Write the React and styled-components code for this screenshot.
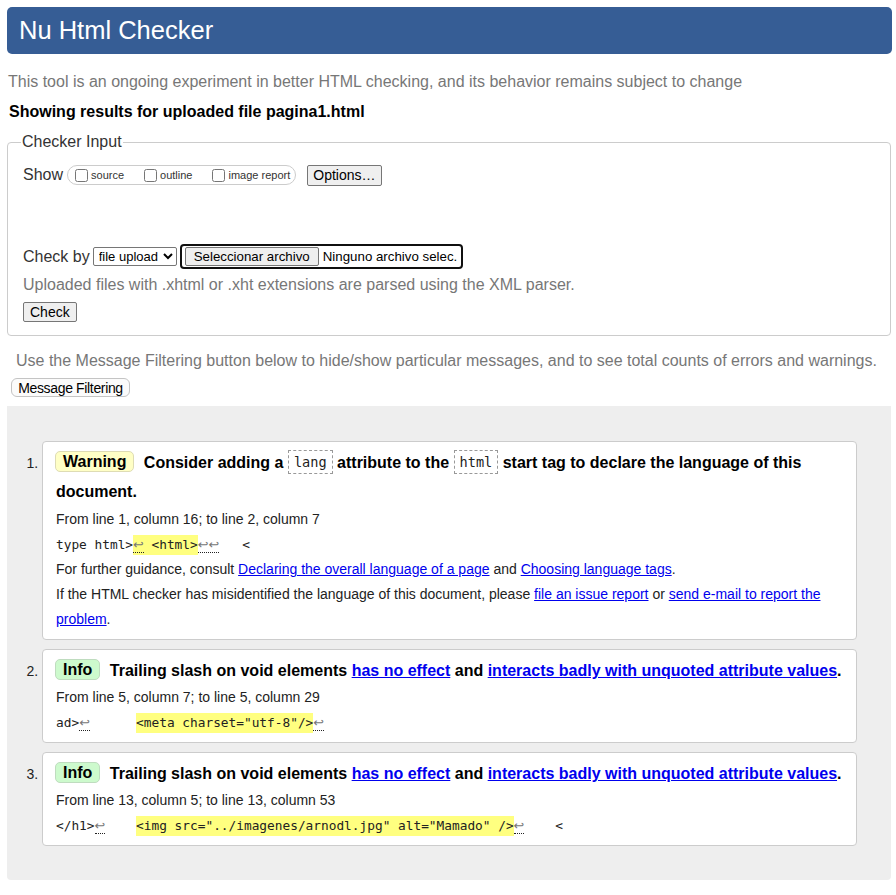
import React from "react";
import styled, { createGlobalStyle } from "styled-components";

const Global = createGlobalStyle`
  html, body { margin: 0; padding: 0; background: #fff; }
  body { font-family: "Liberation Sans", Arial, sans-serif; color: #000; }
`;

const Page = styled.div`
  padding: 7px 4px 15px 7px;
`;

const Header = styled.header`
  height: 47px;
  background: #365d95;
  border-radius: 5px;
  display: flex;
  align-items: center;
  padding-left: 12px;
`;

const Title = styled.h1`
  margin: 0 0 1px 0;
  font-size: 25.5px;
  font-weight: normal;
  color: #fff;
  line-height: 30px;
`;

const Intro = styled.p`
  margin: 18px 0 0 1px;
  font-size: 16px;
  line-height: 20px;
  color: #777;
`;

const Showing = styled.p`
  margin: 10px 0 0 2px;
  font-size: 16px;
  line-height: 20px;
  font-weight: bold;
`;

const Fieldset = styled.fieldset`
  margin: 10px 1px 0 0;
  padding: 0 14px 13px 15px;
  border: 1px solid #ccc;
  border-radius: 4px;
`;

const Legend = styled.legend`
  font-size: 16px;
  line-height: 20px;
  padding: 0 1px;
  margin-left: -2px;
  color: #333;
`;

const Row = styled.div`
  display: flex;
  align-items: center;
  margin-top: ${(p) => p.$mt}px;
  height: ${(p) => p.$h}px;
`;

const Label = styled.span`
  font-size: 16px;
  color: #333;
`;

const Pill = styled.span`
  display: inline-flex;
  align-items: center;
  height: 18px;
  margin-left: 4px;
  padding: 0 5px 0 3px;
  border: 1px solid #ccc;
  border-radius: 10px;
`;

const CheckItem = styled.label`
  display: inline-flex;
  align-items: center;
  font-size: 11px;
  color: #333;
  margin-right: ${(p) => (p.$last ? 0 : 16)}px;
  input { margin: 0 3px 0 4px; width: 13px; height: 13px; }
`;

const Button = styled.button`
  font-family: "Liberation Sans", Arial, sans-serif;
  font-size: ${(p) => p.$fs || 14}px;
  height: ${(p) => p.$h || 21}px;
  padding: 0 ${(p) => p.$px || 5}px;
  margin-left: ${(p) => p.$ml || 0}px;
  background: #efefef;
  color: #000;
  border: 1px solid #767676;
  border-radius: 2px;
  line-height: 1;
`;

const Select = styled.select`
  font-family: "Liberation Sans", Arial, sans-serif;
  font-size: 13px;
  height: 19px;
  width: 84px;
  margin-left: 3px;
  padding: 0 0 0 1px;
  border: 1px solid #767676;
  border-radius: 2px;
  background: #fff;
  color: #000;
`;

const FileBox = styled.span`
  display: inline-flex;
  align-items: center;
  height: 21px;
  margin-left: 3px;
  padding: 0 4px 0 3px;
  border: 2px solid #101010;
  border-radius: 4px;
`;

const FileName = styled.span`
  font-size: 13.3px;
  margin-left: 4px;
  color: #000;
`;

const Note = styled.p`
  margin: ${(p) => p.$mt}px 0 0 ${(p) => p.$ml || 0}px;
  font-size: 16px;
  line-height: 20px;
  color: #777;
  white-space: nowrap;
`;

const FilterButton = styled.button`
  display: block;
  margin: 7px 0 0 4px;
  height: 19px;
  width: 119px;
  padding: 0;
  font-family: "Liberation Sans", Arial, sans-serif;
  font-size: 14px;
  letter-spacing: -0.35px;
  background: #fbfbfb;
  border: 1px solid #c4c4c4;
  border-radius: 6px;
  color: #000;
`;

const Panel = styled.div`
  margin: 9px 1px 0 0;
  padding: 35px 34px 34px 35px;
  background: #eee;
  border-radius: 0 0 4px 4px;
`;

const List = styled.ol`
  margin: 0;
  padding: 0;
`;

const Item = styled.li`
  font-size: 14px;
  color: #222;
  background: #fff;
  border: 1px solid #ccc;
  border-radius: 4px;
  padding: ${(p) => p.$pt}px 14px 7px 13px;
  margin-bottom: ${(p) => (p.$last ? 0 : 9)}px;
`;

const Heading = styled.p`
  margin: 0 0 1px 0;
  font-size: 16px;
  line-height: ${(p) => p.$lh}px;
  font-weight: bold;
  color: #000;
`;

const Badge = styled.strong`
  display: inline-block;
  height: 19px;
  line-height: 19px;
  padding: 0 7px;
  margin: 0 5px 0 -1px;
  border: 1px solid ${(p) => (p.$kind === "warning" ? "#dedcb4" : "#bfdcbf")};
  border-radius: 5px;
  background: ${(p) => (p.$kind === "warning" ? "#ffffc6" : "#cdfacd")};
  color: #000;
  vertical-align: 1px;
`;

const CodeBox = styled.code`
  display: inline-block;
  height: 18px;
  line-height: 18px;
  padding: 2px 5px;
  border: 1px dashed #999;
  font-family: "DejaVu Sans Mono", monospace;
  font-size: 13.6px;
  font-weight: normal;
  color: #222;
  vertical-align: 1px;
`;

const Line = styled.p`
  margin: 0;
  font-size: 14px;
  line-height: 25px;
  color: #222;
`;

const Extract = styled.p`
  margin: 0;
  font-family: "DejaVu Sans Mono", monospace;
  font-size: 12.8px;
  line-height: 25px;
  white-space: pre;
  color: #222;
`;

const Mark = styled.mark`
  background: #ffff80;
  color: #222;
  padding: 2px 0 3px;
`;

const LF = styled.span`
  font-family: "DejaVu Sans", sans-serif;
  color: #777;
  border-bottom: 1px dotted #222;
`;

const A = styled.a`
  color: #0000ee;
  text-decoration: underline;
`;

const InfoHeading = () => (
  <Heading $lh={27}>
    <Badge $kind="info">Info</Badge> Trailing slash on void elements{" "}
    <A href="#">has no effect</A> and{" "}
    <A href="#">interacts badly with unquoted attribute values</A>.
  </Heading>
);

export default function App() {
  return (
    <>
      <Global />
      <Page>
        <Header>
          <Title>Nu Html Checker</Title>
        </Header>
        <Intro>
          This tool is an ongoing experiment in better HTML checking, and its behavior remains subject to change
        </Intro>
        <Showing>Showing results for uploaded file pagina1.html</Showing>

        <Fieldset>
          <Legend>Checker Input</Legend>
          <Row $mt={12} $h={22}>
            <Label>Show</Label>
            <Pill>
              <CheckItem>
                <input type="checkbox" />
                source
              </CheckItem>
              <CheckItem>
                <input type="checkbox" />
                outline
              </CheckItem>
              <CheckItem $last>
                <input type="checkbox" />
                image report
              </CheckItem>
            </Pill>
            <Button $ml={11}>Options…</Button>
          </Row>
          <Row $mt={58} $h={25}>
            <Label>Check by</Label>
            <Select defaultValue="file">
              <option value="file">file upload</option>
              <option value="address">address</option>
              <option value="text">text input</option>
            </Select>
            <FileBox>
              <Button $fs={13.3} $h={19} $px={8}>Seleccionar archivo</Button>
              <FileName>Ninguno archivo selec.</FileName>
            </FileBox>
          </Row>
          <Note $mt={6}>Uploaded files with .xhtml or .xht extensions are parsed using the XML parser.</Note>
          <Row $mt={7} $h={20}>
            <Button $h={20} $px={6}>Check</Button>
          </Row>
        </Fieldset>

        <Note $mt={15} $ml={9}>
          Use the Message Filtering button below to hide/show particular messages, and to see total counts of errors and warnings.
        </Note>
        <FilterButton>Message Filtering</FilterButton>

        <Panel>
          <List>
            <Item $pt={6}>
              <Heading $lh={29}>
                <Badge $kind="warning">Warning</Badge> Consider adding a <CodeBox>lang</CodeBox> attribute to the{" "}
                <CodeBox>html</CodeBox> start tag to declare the language of this document.
              </Heading>
              <Line>From line 1, column 16; to line 2, column 7</Line>
              <Extract>
                {"type html>"}
                <Mark>
                  <LF>↩</LF>
                  {" <html>"}
                </Mark>
                <LF>↩↩</LF>
                {"   <"}
              </Extract>
              <Line>
                For further guidance, consult <A href="#">Declaring the overall language of a page</A> and{" "}
                <A href="#">Choosing language tags</A>.
              </Line>
              <Line>
                If the HTML checker has misidentified the language of this document, please{" "}
                <A href="#">file an issue report</A> or <A href="#">send e-mail to report the problem</A>.
              </Line>
            </Item>
            <Item $pt={7}>
              <InfoHeading />
              <Line>From line 5, column 7; to line 5, column 29</Line>
              <Extract>
                {"ad>"}
                <LF>↩</LF>
                {"      "}
                <Mark>{'<meta charset="utf-8"/>'}</Mark>
                <LF>↩</LF>
              </Extract>
            </Item>
            <Item $pt={7} $last>
              <InfoHeading />
              <Line>From line 13, column 5; to line 13, column 53</Line>
              <Extract>
                {"</h1>"}
                <LF>↩</LF>
                {"    "}
                <Mark>{'<img src="../imagenes/arnodl.jpg" alt="Mamado" />'}</Mark>
                <LF>↩</LF>
                {"    <"}
              </Extract>
            </Item>
          </List>
        </Panel>
      </Page>
    </>
  );
}
